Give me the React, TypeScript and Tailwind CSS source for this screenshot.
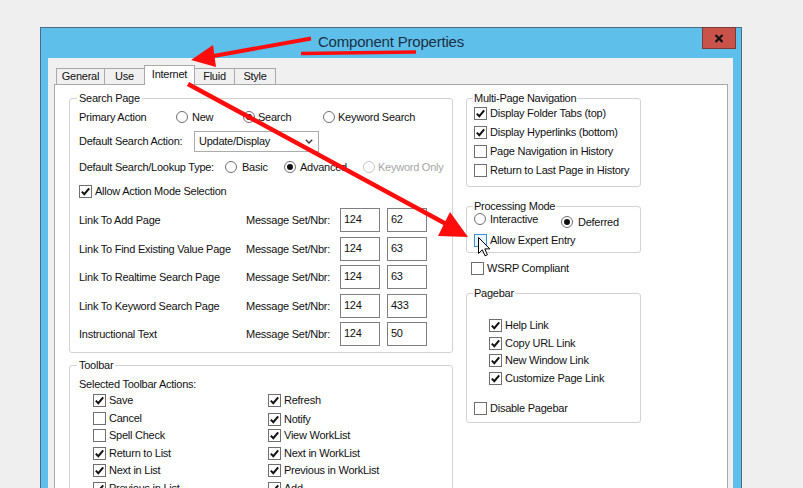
import React from "react";

function Cb({ checked = false, hover = false }: { checked?: boolean; hover?: boolean }) {
  return (
    <span
      className={`flex-none inline-flex items-center justify-center w-[13px] h-[13px] border ${
        hover ? "border-[#3c8fd6] bg-[#eaf4fc]" : "border-[#6f6f6f] bg-white"
      }`}
    >
      {checked && (
        <svg width="11" height="11" viewBox="0 0 11 11">
          <path d="M1.8 5.6 L4.3 8.2 L9.2 2.4" fill="none" stroke="#111" strokeWidth="2" />
        </svg>
      )}
    </span>
  );
}

function Rb({ checked = false, disabled = false }: { checked?: boolean; disabled?: boolean }) {
  return (
    <span
      className={`flex-none inline-flex items-center justify-center w-[12px] h-[12px] rounded-full border bg-white ${
        disabled ? "border-[#c8c8c8]" : "border-[#6f6f6f]"
      }`}
    >
      {checked && <span className="w-[6px] h-[6px] rounded-full bg-[#111]" />}
    </span>
  );
}

function CheckItem({
  checked = false,
  label,
  cls = "",
  hover = false,
}: {
  checked?: boolean;
  label: string;
  cls?: string;
  hover?: boolean;
}) {
  return (
    <div className={`flex items-center ${cls}`}>
      <Cb checked={checked} hover={hover} />
      <span className="ml-[3px] whitespace-nowrap">{label}</span>
    </div>
  );
}

function NumBox({ v, cls = "" }: { v: string; cls?: string }) {
  return (
    <div className={`flex-none w-[40px] h-[24px] border border-[#7f7f7f] bg-white pl-[3px] pt-[3px] leading-[14px] ${cls}`}>
      {v}
    </div>
  );
}

function LinkRow({ label, a, b, cls }: { label: string; a: string; b: string; cls: string }) {
  return (
    <div className={`h-[24px] flex items-center ${cls}`}>
      <span className="w-[167px] flex-none whitespace-nowrap">{label}</span>
      <span className="w-[94px] flex-none whitespace-nowrap">Message Set/Nbr:</span>
      <NumBox v={a} />
      <NumBox v={b} cls="ml-[7px]" />
    </div>
  );
}

function Tab({ label, active = false, cls }: { label: string; active?: boolean; cls: string }) {
  return (
    <div
      className={`flex items-center justify-center border-t border-l border-r border-[#a9a9a9] ${cls} ${
        active ? "h-[20px] bg-white z-10 pb-[3px]" : "h-[16px] mb-px bg-[#f0f0f0]"
      }`}
    >
      {label}
    </div>
  );
}

export default function App() {
  return (
    <div className="relative w-[803px] h-[488px] overflow-hidden bg-[#efefef] pt-[27px] pl-[40px] font-['Liberation_Sans',Arial,sans-serif] text-[11px] tracking-[-0.25px] text-[#111]">
      {/* Window */}
      <div className="w-[702px] h-[480px] border border-[#4a6c84] bg-[#5ec0ea] flex flex-col">
        {/* Title bar */}
        <div className="h-[30px] flex-none grid grid-cols-[1fr_auto_1fr]">
          <div />
          <div className="self-center text-[15px] tracking-[-0.2px] text-[#1c2f44] pb-[1px]">Component Properties</div>
          <div className="justify-self-end self-start -mt-px mr-[5px] w-[34px] h-[22px] bg-[#c9524b] border border-[#7e3a35] flex items-center justify-center">
            <svg width="10" height="9" viewBox="0 0 10 9">
              <path d="M1.5 1 L8.5 8 M8.5 1 L1.5 8" stroke="#111" strokeWidth="2.2" />
            </svg>
          </div>
        </div>
        {/* Client area */}
        <div className="flex-1 ml-[7px] mr-[8px] bg-[#f0f0f0] pl-[6px] pr-[5px] pt-[7px] flex flex-col">
          {/* Tabs */}
          <div className="h-[20px] flex items-end ml-[2px] relative z-10">
            <Tab label="General" cls="w-[49px]" />
            <Tab label="Use" cls="w-[41px] -ml-px" />
            <Tab label="Internet" active cls="w-[51px] -ml-px" />
            <Tab label="Fluid" cls="w-[41px] -ml-px" />
            <Tab label="Style" cls="w-[42px] -ml-px" />
          </div>
          {/* Panel */}
          <div className="flex-1 -mt-px border border-[#a9a9a9] bg-white pl-[14px] pt-[7px] flex gap-[13px]">
            {/* Left column */}
            <div className="w-[384px] flex-none flex flex-col">
              <fieldset className="border border-[#d3d3d3] rounded-[3px]">
                <legend className="ml-[7px] px-[2px] leading-[12px]">Search Page</legend>
                <div className="pl-[9px] pt-[4px] pb-[6px] flex flex-col">
                  <div className="h-[18px] flex items-center">
                    <span className="w-[97px] flex-none">Primary Action</span>
                    <div className="w-[67px] flex-none flex items-center">
                      <Rb />
                      <span className="ml-[4px]">New</span>
                    </div>
                    <div className="w-[80px] flex-none flex items-center">
                      <Rb checked />
                      <span className="ml-[3px]">Search</span>
                    </div>
                    <div className="flex items-center">
                      <Rb />
                      <span className="ml-[3px] whitespace-nowrap">Keyword Search</span>
                    </div>
                  </div>
                  <div className="h-[21px] mt-[5px] flex items-center">
                    <span className="w-[115px] flex-none whitespace-nowrap">Default Search Action:</span>
                    <div className="w-[125px] h-[21px] border border-[#acacac] bg-white flex items-center justify-between pl-[4px] pr-[5px]">
                      <span>Update/Display</span>
                      <svg width="8" height="5" viewBox="0 0 8 5">
                        <path d="M0.8 0.8 L4 4 L7.2 0.8" fill="none" stroke="#333" strokeWidth="1.3" />
                      </svg>
                    </div>
                  </div>
                  <div className="h-[18px] mt-[6px] flex items-center">
                    <span className="w-[146px] flex-none whitespace-nowrap">Default Search/Lookup Type:</span>
                    <div className="w-[59px] flex-none flex items-center">
                      <Rb />
                      <span className="ml-[5px]">Basic</span>
                    </div>
                    <div className="w-[79px] flex-none flex items-center">
                      <Rb checked />
                      <span className="ml-[4px]">Advanced</span>
                    </div>
                    <div className="flex items-center">
                      <Rb disabled />
                      <span className="ml-[3px] whitespace-nowrap text-[#a6a6a6]">Keyword Only</span>
                    </div>
                  </div>
                  <CheckItem checked label="Allow Action Mode Selection" cls="h-[18px] mt-[6px]" />
                  <LinkRow label="Link To Add Page" a="124" b="62" cls="mt-[8px]" />
                  <LinkRow label="Link To Find Existing Value Page" a="124" b="63" cls="mt-[5px]" />
                  <LinkRow label="Link To Realtime Search Page" a="124" b="63" cls="mt-[4px]" />
                  <LinkRow label="Link To Keyword Search Page" a="124" b="433" cls="mt-[5px]" />
                  <LinkRow label="Instructional Text" a="124" b="50" cls="mt-[4px]" />
                </div>
              </fieldset>
              <fieldset className="mt-[6px] border border-[#d3d3d3] rounded-[3px] flex-1">
                <legend className="ml-[7px] px-[2px] leading-[12px]">Toolbar</legend>
                <div className="pl-[9px] pt-[6px] flex flex-col">
                  <div className="h-[14px] flex items-center">Selected Toolbar Actions:</div>
                  <div className="mt-[1px] flex">
                    <div className="ml-[14px] w-[175px] flex-none flex flex-col">
                      <CheckItem checked label="Save" cls="h-[17px]" />
                      <CheckItem label="Cancel" cls="h-[18px]" />
                      <CheckItem label="Spell Check" cls="h-[17px]" />
                      <CheckItem checked label="Return to List" cls="h-[18px]" />
                      <CheckItem checked label="Next in List" cls="h-[17px]" />
                      <CheckItem checked label="Previous in List" cls="h-[18px]" />
                    </div>
                    <div className="flex flex-col">
                      <CheckItem checked label="Refresh" cls="h-[17px]" />
                      <CheckItem checked label="Notify" cls="h-[18px] pt-[3px]" />
                      <CheckItem checked label="View WorkList" cls="h-[17px]" />
                      <CheckItem checked label="Next in WorkList" cls="h-[18px]" />
                      <CheckItem checked label="Previous in WorkList" cls="h-[17px]" />
                      <CheckItem checked label="Add" cls="h-[18px]" />
                    </div>
                  </div>
                </div>
              </fieldset>
            </div>
            {/* Right column */}
            <div className="w-[175px] flex-none flex flex-col">
              <fieldset className="border border-[#d3d3d3] rounded-[3px]">
                <legend className="ml-[6px] px-[1px] leading-[12px]">Multi-Page Navigation</legend>
                <div className="pl-[7px] pb-[6px] flex flex-col">
                  <CheckItem checked label="Display Folder Tabs (top)" cls="h-[19px]" />
                  <CheckItem checked label="Display Hyperlinks (bottom)" cls="h-[19px]" />
                  <CheckItem label="Page Navigation in History" cls="h-[19px]" />
                  <CheckItem label="Return to Last Page in History" cls="h-[19px]" />
                </div>
              </fieldset>
              <fieldset className="mt-[13px] border border-[#d3d3d3] rounded-[3px]">
                <legend className="ml-[6px] px-[1px] leading-[12px]">Processing Mode</legend>
                <div className="pl-[7px] pb-[4px] flex flex-col">
                  <div className="h-[17px] flex items-start">
                    <div className="w-[87px] flex-none h-[14px] flex items-center">
                      <Rb />
                      <span className="ml-[4px]">Interactive</span>
                    </div>
                    <div className="mt-[3px] h-[14px] flex items-center">
                      <Rb checked />
                      <span className="ml-[5px]">Deferred</span>
                    </div>
                  </div>
                  <CheckItem hover label="Allow Expert Entry" cls="h-[16px] mt-[3px]" />
                </div>
              </fieldset>
              <CheckItem label="WSRP Compliant" cls="h-[16px] mt-[7px] ml-[5px]" />
              <fieldset className="mt-[11px] border border-[#d3d3d3] rounded-[3px]">
                <legend className="ml-[6px] px-[1px] leading-[12px]">Pagebar</legend>
                <div className="pt-[18px] pb-[6px] flex flex-col">
                  <CheckItem checked label="Help Link" cls="h-[17px] pl-[22px]" />
                  <CheckItem checked label="Copy URL Link" cls="h-[18px] pl-[22px]" />
                  <CheckItem checked label="New Window Link" cls="h-[17px] pl-[22px]" />
                  <CheckItem checked label="Customize Page Link" cls="h-[18px] pl-[22px]" />
                  <CheckItem label="Disable Pagebar" cls="h-[16px] mt-[13px] pl-[7px]" />
                </div>
              </fieldset>
            </div>
          </div>
        </div>
      </div>

      {/* Annotation overlay: red arrows + mouse cursor */}
      <svg className="absolute left-0 top-0 pointer-events-none z-20" width="803" height="488" viewBox="0 0 803 488">
        <line x1="311" y1="38.5" x2="208" y2="57" stroke="#ff0c0c" strokeWidth="4" />
        <polygon points="191,60 213,45 216,67" fill="#ff0c0c" />
        <line x1="301" y1="53.5" x2="416" y2="52" stroke="#ff0c0c" strokeWidth="3.5" />
        <line x1="188" y1="84" x2="448" y2="225" stroke="#ff0c0c" strokeWidth="4.5" />
        <polygon points="468,237 450,212 438,236" fill="#ff0c0c" />
        <g transform="translate(478 237)">
          <path
            d="M0.5 0.5 L0.5 16.5 L4.3 12.8 L7 18.8 L9.4 17.8 L6.8 11.9 L11.8 11.9 Z"
            fill="#fff"
            stroke="#000"
            strokeWidth="1"
            strokeLinejoin="miter"
          />
        </g>
      </svg>
    </div>
  );
}
